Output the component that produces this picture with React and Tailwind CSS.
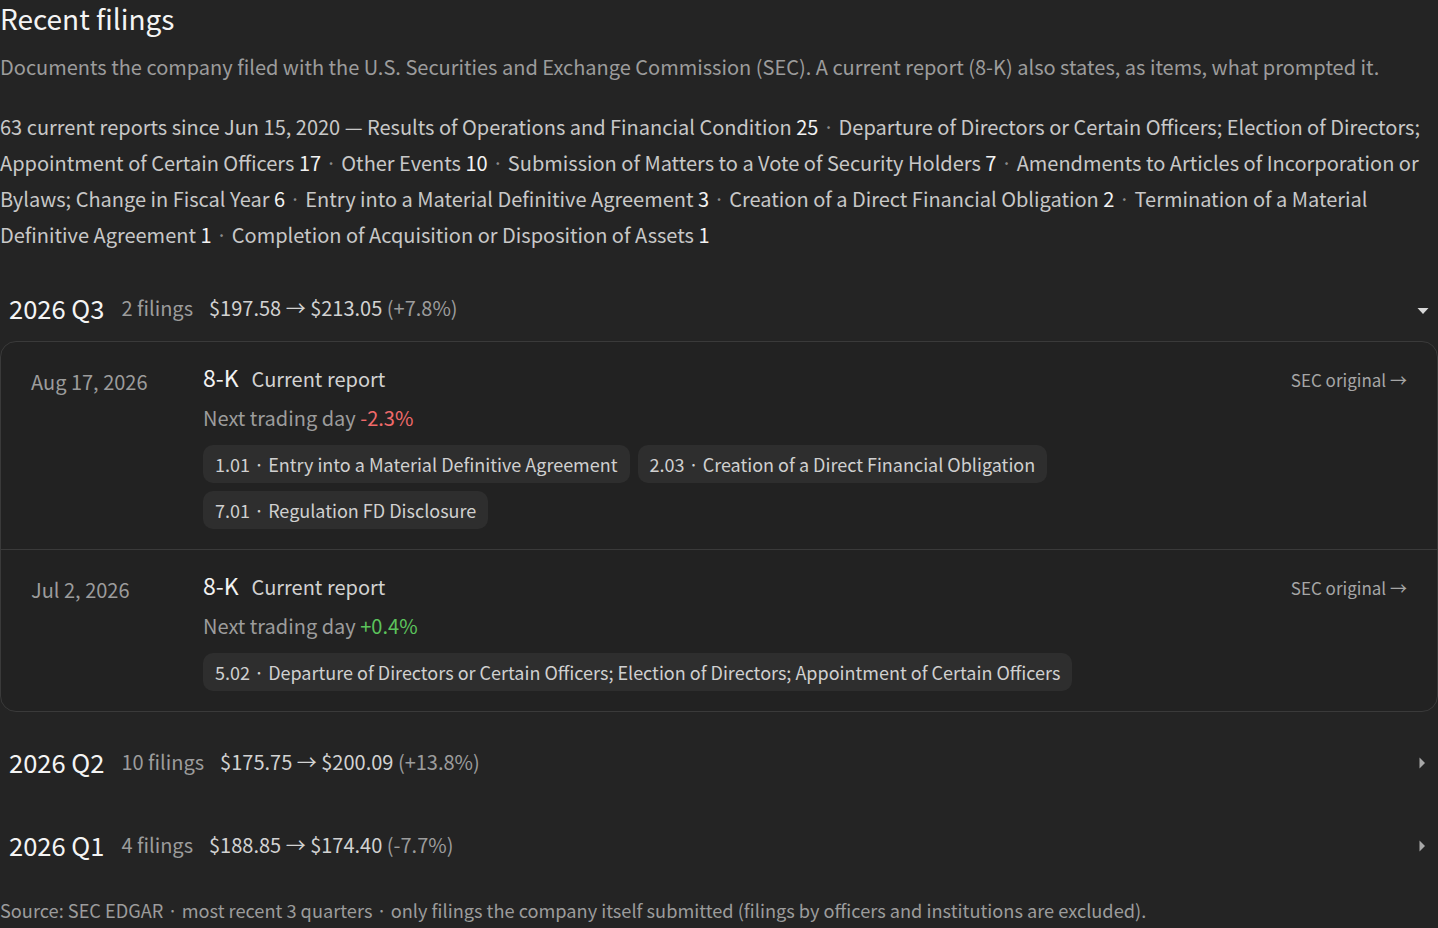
import React, { useState } from 'react';

const font = { fontFamily: '"Noto Sans CJK KR", "Noto Sans", sans-serif' };

const summary = [
    ['Results of Operations and Financial Condition', 25],
    ['Departure of Directors or Certain Officers; Election of Directors; Appointment of Certain Officers', 17],
    ['Other Events', 10],
    ['Submission of Matters to a Vote of Security Holders', 7],
    ['Amendments to Articles of Incorporation or Bylaws; Change in Fiscal Year', 6],
    ['Entry into a Material Definitive Agreement', 3],
    ['Creation of a Direct Financial Obligation', 2],
    ['Termination of a Material Definitive Agreement', 1],
    ['Completion of Acquisition or Disposition of Assets', 1],
];

const quarters = [
    {
        label: '2026 Q3',
        count: '2 filings',
        price: '$197.58 → $213.05',
        change: '(+7.8%)',
        filings: [
            {
                date: 'Aug 17, 2026',
                move: '-2.3%',
                up: false,
                items: [
                    '1.01 · Entry into a Material Definitive Agreement',
                    '2.03 · Creation of a Direct Financial Obligation',
                    '7.01 · Regulation FD Disclosure',
                ],
            },
            {
                date: 'Jul 2, 2026',
                move: '+0.4%',
                up: true,
                items: [
                    '5.02 · Departure of Directors or Certain Officers; Election of Directors; Appointment of Certain Officers',
                ],
            },
        ],
    },
    { label: '2026 Q2', count: '10 filings', price: '$175.75 → $200.09', change: '(+13.8%)', filings: [] },
    { label: '2026 Q1', count: '4 filings', price: '$188.85 → $174.40', change: '(-7.7%)', filings: [] },
];

function Caret({ open }) {
    return open ? (
        <svg width="12" height="8" viewBox="0 0 12 8" className="mt-[6px] mr-[-1px]">
            <path d="M0.5 1h11L6 7z" fill="#d8d8d8" />
        </svg>
    ) : (
        <svg width="8" height="12" viewBox="0 0 8 12" className="mt-[2px] mr-[2px]">
            <path d="M1.5 0.5v11L7 6z" fill="#a8a8a8" />
        </svg>
    );
}

function FilingRow({ filing, last }) {
    return (
        <div className={`flex px-[30px] pt-[20px] pb-[20px] ${last ? '' : 'border-b border-[#3a3a3a]'}`}>
            <div className="w-[172px] shrink-0 pt-[5px] text-[20px] leading-[30px] text-[#9c9c9c]">
                {filing.date}
            </div>
            <div className="flex-1">
                <div className="flex items-baseline">
                    <span className="text-[23px] leading-[30px] text-[#f2f2f2]">8-K</span>
                    <span className="ml-[13px] text-[20px] leading-[30px] text-[#d2d2d2]">Current report</span>
                </div>
                <div className="mt-[9px] text-[20px] leading-[30px] text-[#9c9c9c]">
                    Next trading day{' '}
                    <span className={filing.up ? 'text-[#5cc45c]' : 'text-[#f06a6a]'}>{filing.move}</span>
                </div>
                <div className="mt-[12px] flex flex-wrap gap-[8px]">
                    {filing.items.map((item) => (
                        <span
                            key={item}
                            className="rounded-[10px] bg-[#2e2e2e] px-[12px] h-[38px] flex items-center text-[18px] text-[#d0d0d0]"
                        >
                            {item}
                        </span>
                    ))}
                </div>
            </div>
            <a className="ml-[24px] shrink-0 pt-[3px] text-[17px] leading-[30px] text-[#a6a6a6]">SEC original →</a>
        </div>
    );
}

function Quarter({ q, defaultOpen }) {
    const [open, setOpen] = useState(defaultOpen);
    return (
        <div>
            <button
                onClick={() => setOpen(!open)}
                className="flex w-full items-center pl-[9px] pr-[10px] pt-[32px] pb-[15px] text-left"
            >
                <span className="text-[25.5px] leading-[36px] text-[#f4f4f4]">{q.label}</span>
                <span className="ml-[17px] text-[20px] text-[#9c9c9c]">{q.count}</span>
                <span className="ml-[16px] text-[20px] text-[#d2d2d2]">
                    {q.price} <span className="text-[#9c9c9c]">{q.change}</span>
                </span>
                <span className="ml-auto">
                    <Caret open={open} />
                </span>
            </button>
            {open && q.filings.length > 0 && (
                <div className="rounded-[16px] border border-[#3a3a3a] bg-[#222222]">
                    {q.filings.map((f, i) => (
                        <FilingRow key={f.date} filing={f} last={i === q.filings.length - 1} />
                    ))}
                </div>
            )}
        </div>
    );
}

export default function App() {
    return (
        <div className="min-h-screen bg-[#242424] text-[#d0d0d0]" style={font}>
            <h2 className="text-[28px] leading-[36px] text-[#f4f4f4]">Recent filings</h2>
            <p className="mt-[13px] text-[20px] leading-[36px] text-[#9c9c9c]">
                Documents the company filed with the U.S. Securities and Exchange Commission (SEC). A current report
                (8-K) also states, as items, what prompted it.
            </p>
            <p className="mt-[24px] mb-[5px] text-[20px] leading-[36px] text-[#c8c8c8]">
                63 current reports since Jun 15, 2020 —{' '}
                {summary.map(([name, n], i) => (
                    <React.Fragment key={name}>
                        {i > 0 && <span className="text-[#8a8a8a]"> · </span>}
                        {name} <span className="text-[#f2f2f2]">{n}</span>
                    </React.Fragment>
                ))}
            </p>
            {quarters.map((q, i) => (
                <Quarter key={q.label} q={q} defaultOpen={i === 0} />
            ))}
            <p className="mt-[18px] pb-[4px] text-[18.2px] leading-[28px] text-[#9c9c9c]">
                Source: SEC EDGAR · most recent 3 quarters · only filings the company itself submitted (filings by
                officers and institutions are excluded).
            </p>
        </div>
    );
}
